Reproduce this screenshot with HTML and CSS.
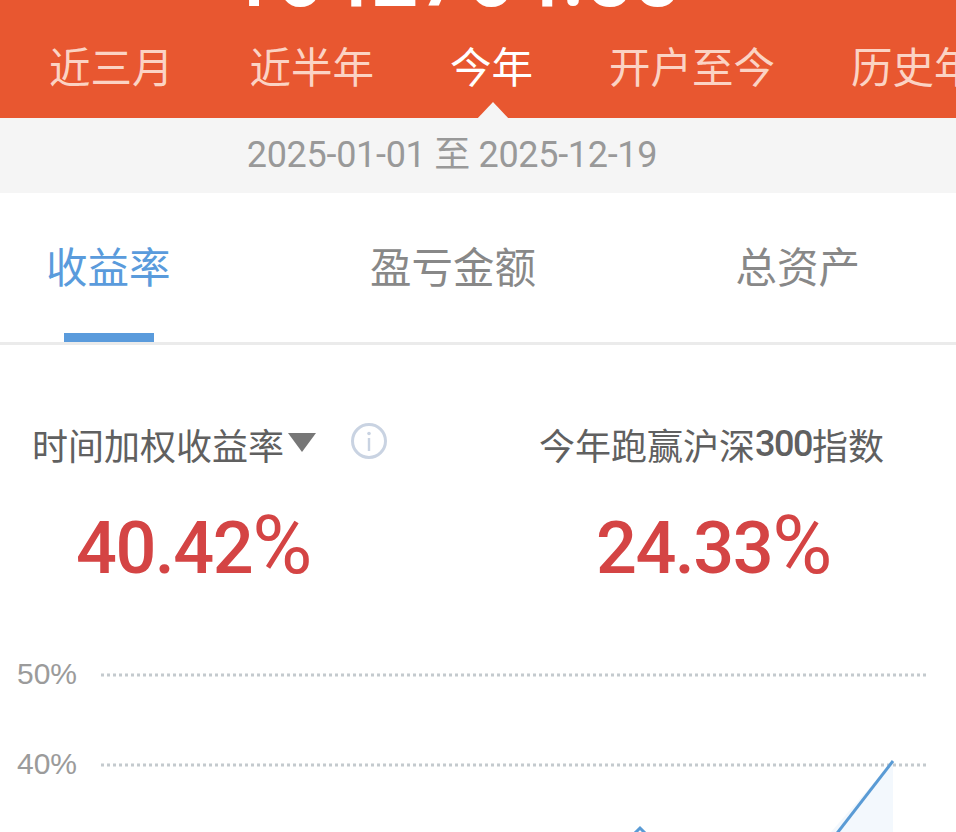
FILE: index.html
```html
<!DOCTYPE html>
<html lang="zh-CN">
<head>
    <meta charset="UTF-8">
    <meta name="viewport" content="width=device-width, initial-scale=1.0">
    <title>收益率</title>
    <link rel="stylesheet" href="styles.css">
</head>
<body>
    <div class="page">
        <div class="header">
            <div class="total">1642764.55</div>
            <div class="periods">
                <div class="period">近三月</div>
                <div class="period">近半年</div>
                <div class="period active">今年</div>
                <div class="period">开户至今</div>
                <div class="period">历史年</div>
            </div>
        </div>
        <div class="date-range">2025-01-01 至 2025-12-19</div>
        <div class="tabs">
            <div class="tab active">收益率</div>
            <div class="tab">盈亏金额</div>
            <div class="tab">总资产</div>
        </div>
        <div class="stats">
            <div class="stat">
                <div class="stat-title">
                    时间加权收益率<span class="caret"></span>
                    <svg class="info" width="38" height="38" viewBox="0 0 38 38">
                        <circle cx="19" cy="19" r="16.5" fill="none" stroke="#c9d3e2" stroke-width="3"/>
                        <circle cx="19" cy="11.5" r="1.8" fill="#c9d3e2"/>
                        <rect x="17.8" y="16" width="2.4" height="13" fill="#c9d3e2"/>
                    </svg>
                </div>
                <div class="stat-value">40.42<span class="pct">%</span></div>
            </div>
            <div class="stat second">
                <div class="stat-title">今年跑赢沪深<span class="num">300</span>指数</div>
                <div class="stat-value">24.33<span class="pct">%</span></div>
            </div>
        </div>
        <div class="chart">
            <svg width="956" height="192" viewBox="0 0 956 192">
                <text class="axis" x="17" y="44">50%</text>
                <text class="axis" x="17" y="134">40%</text>
                <line class="grid" x1="101" y1="35" x2="926" y2="35"/>
                <line class="grid" x1="101" y1="125" x2="926" y2="125"/>
                <polygon points="831,192 893,121 893,192" fill="#f3f8fd"/>
                <polyline class="curve" points="831,201 893,121"/>
                <polyline class="curve" points="620,208 640,188 660,208"/>
            </svg>
        </div>
    </div>
</body>
</html>
```

FILE: styles.css
```css
body {
    margin: 0;
    background-color: #fff;
    font-family: "Noto Sans CJK SC", "Noto Sans", sans-serif;
}
.page {
    width: 956px;
    height: 832px;
    overflow: hidden;
}
.header {
    height: 118px;
    background-color: #e85730;
    overflow: hidden;
}
.total {
    margin-top: -51px;
    padding-right: 48px;
    height: 58px;
    line-height: 58px;
    text-align: center;
    font-family: Roboto, sans-serif;
    font-weight: 500;
    font-size: 84px;
    color: #fff;
    white-space: nowrap;
}
.periods {
    display: flex;
    gap: 76px;
    padding-left: 49px;
    margin-top: 28px;
    white-space: nowrap;
}
.period {
    font-size: 41.5px;
    line-height: 60px;
    font-weight: 400;
    color: #fbd3c4;
}
.period.active {
    position: relative;
    color: #fff;
}
.period.active::after {
    content: "";
    position: absolute;
    left: 50%;
    top: 67px;
    margin-left: -16px;
    border-left: 17px solid transparent;
    border-right: 17px solid transparent;
    border-bottom: 18px solid #f5f5f5;
}
.date-range {
    height: 75px;
    line-height: 74px;
    padding-right: 52px;
    background-color: #f5f5f5;
    text-align: center;
    font-family: Roboto, "Noto Sans CJK SC", sans-serif;
    font-size: 36px;
    font-weight: 400;
    letter-spacing: -0.3px;
    color: #999;
}
.tabs {
    display: flex;
    justify-content: space-between;
    height: 152px;
    box-sizing: border-box;
    padding: 0 96px 0 46px;
    border-bottom: 3px solid #ebebeb;
}
.tab {
    position: relative;
    font-size: 41.5px;
    line-height: 144px;
    font-weight: 400;
    color: #888;
}
.tab.active {
    color: #5a9bdc;
}
.tab.active::after {
    content: "";
    position: absolute;
    left: 18px;
    right: 17px;
    bottom: 0;
    height: 9px;
    background-color: #5a9bdc;
}
.stats {
    display: flex;
    height: 295px;
    box-sizing: border-box;
    padding-top: 74px;
}
.stat {
    width: 500px;
    padding-left: 32px;
    box-sizing: border-box;
}
.stat.second {
    width: 456px;
    padding-left: 39px;
}
.stat-title {
    display: flex;
    align-items: center;
    height: 50px;
    font-size: 36px;
    font-weight: 400;
    color: #606060;
    white-space: nowrap;
}
.num {
    font-family: Roboto, sans-serif;
    font-weight: 500;
    letter-spacing: -1.5px;
}
.caret {
    margin: 0 0 4px 4px;
    border-left: 14px solid transparent;
    border-right: 14px solid transparent;
    border-top: 19px solid #777;
}
.info {
    margin: 0 0 6px 34px;
}
.stat-value {
    margin-top: 33px;
    padding-left: 44px;
    font-family: Roboto, sans-serif;
    font-weight: 500;
    font-size: 72px;
    letter-spacing: -1.5px;
    line-height: 86px;
    color: #d44444;
}
.stat.second .stat-value {
    padding-left: 57px;
}
.pct {
    font-size: 82px;
    font-weight: 400;
    letter-spacing: 0;
}
.chart svg {
    display: block;
}
.axis {
    font-family: "Liberation Sans", sans-serif;
    font-size: 30px;
    fill: #9b9b9b;
}
.grid {
    stroke: #c4cace;
    stroke-width: 3;
    stroke-dasharray: 3 3;
}
.curve {
    fill: none;
    stroke: #5a9bd5;
    stroke-width: 3;
}
```
